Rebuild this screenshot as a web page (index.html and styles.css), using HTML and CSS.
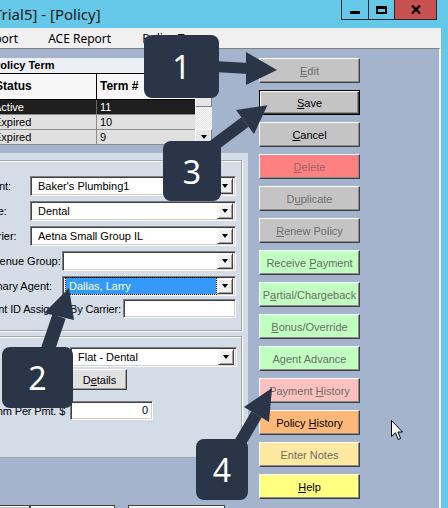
FILE: index.html
```html
<!DOCTYPE html>
<html>
<head>
<meta charset="utf-8">
<title>Policy</title>
<link rel="stylesheet" href="styles.css">
</head>
<body>
<header class="titlebar">
  <div class="title">[Trial5] - [Policy]</div>
  <div class="winbtns">
    <div class="wb wb-min"><span class="g-min"></span></div>
    <div class="wb wb-max"><span class="g-max"></span></div>
    <div class="wb wb-close"><svg width="10" height="9" viewBox="0 0 10 9"><path d="M1 0.5 L9 8.5 M9 0.5 L1 8.5" stroke="#000" stroke-width="2.2"/></svg></div>
  </div>
</header>
<div class="frame">
  <nav class="menubar">
    <span class="mi mi-first">Report</span>
    <span class="mi mi-ace">ACE Report</span>
    <span class="mi">Policy Term</span>
  </nav>
  <main class="client">
    <section class="left">
      <div class="term">
        <div class="term-title">Policy Term</div>
        <div class="term-body">
          <div class="term-table">
            <div class="trow thead"><div class="c1">Status</div><div class="c2">Term #</div></div>
            <div class="trow tsel"><div class="c1">Active</div><div class="c2">11</div></div>
            <div class="trow"><div class="c1">Expired</div><div class="c2">10</div></div>
            <div class="trow"><div class="c1">Expired</div><div class="c2">9</div></div>
          </div>
          <div class="vscroll">
            <div class="sb-btn"></div>
            <div class="sb-thumb"></div>
            <div class="sb-track"></div>
            <div class="sb-btn sb-down"><span class="tri"></span></div>
          </div>
        </div>
      </div>

      <div class="panel">
        <div class="grp grp1">
          <div class="frow"><span class="lbl w50">Client:</span><div class="combo"><span class="val">Baker's Plumbing1</span><span class="dd"><span class="tri"></span></span></div></div>
          <div class="frow"><span class="lbl w50">Type:</span><div class="combo"><span class="val">Dental</span><span class="dd"><span class="tri"></span></span></div></div>
          <div class="frow"><span class="lbl w50">Carrier:</span><div class="combo"><span class="val">Aetna Small Group IL</span><span class="dd"><span class="tri"></span></span></div></div>
          <div class="frow"><span class="lbl w82">Revenue Group:</span><div class="combo"><span class="val"></span><span class="dd"><span class="tri"></span></span></div></div>
          <div class="frow"><span class="lbl w82">Primary Agent:</span><div class="combo"><span class="val hl">Dallas, Larry</span><span class="dd"><span class="tri"></span></span></div></div>
          <div class="frow frow-last"><span class="lbl w143 tight">Client ID Assigned By Carrier:</span><div class="tbox"></div></div>
        </div>
        <div class="grp grp2">
          <div class="frow"><span class="lbl w90"></span><div class="combo c-flat"><span class="val">Flat - Dental</span><span class="dd"><span class="tri"></span></span></div></div>
          <div class="frow frow-btn"><span class="lbl w92"></span><div class="pbtn">D<u>e</u>tails</div></div>
          <div class="frow frow-amt"><span class="lbl w90 tight">Comm Per Pmt. $</span><div class="tbox amt">0</div></div>
        </div>
      </div>

      <div class="bottom">
        <div class="bt bt1"></div>
        <div class="bt bt2"></div>
        <div class="bt bt3"></div>
      </div>
    </section>

    <aside class="buttons">
      <div class="btn gray dis"><span><u>E</u>dit</span></div>
      <div class="btn gray default"><span><u>S</u>ave</span></div>
      <div class="btn gray"><span><u>C</u>ancel</span></div>
      <div class="btn red dis"><span><u>D</u>elete</span></div>
      <div class="btn gray dis"><span>D<u>u</u>plicate</span></div>
      <div class="btn gray dis"><span><u>R</u>enew Policy</span></div>
      <div class="btn green dis"><span>Receive <u>P</u>ayment</span></div>
      <div class="btn green dis"><span>P<u>a</u>rtial/Chargeback</span></div>
      <div class="btn green dis"><span><u>B</u>onus/Override</span></div>
      <div class="btn green dis"><span>Agent Advance</span></div>
      <div class="btn pink dis"><span>Payment <u>H</u>istory</span></div>
      <div class="btn orange"><span>Policy <u>H</u>istory</span></div>
      <div class="btn cream dis"><span>Enter Notes</span></div>
      <div class="btn yellow"><span><u>H</u>elp</span></div>
    </aside>
  </main>
</div>

<div class="callout co1">1</div>
<div class="callout co2">2</div>
<div class="callout co3">3</div>
<div class="callout co4">4</div>

<svg class="arrows" width="448" height="508" viewBox="0 0 448 508">
  <g fill="#2b3548">
    <polygon points="214,61 249,63 249,74 214,72"/>
    <polygon points="246,52 277,70 246,85"/>
    <polygon points="208.6,156.8 201.4,147.2 241.4,117.2 248.6,126.8"/>
    <polygon points="236,110 267.4,105.2 254,134"/>
    <polygon points="53.6,354.3 40.4,349.7 52.4,314.2 65.6,318.8"/>
    <polygon points="44,313 69,288 74,320"/>
    <polygon points="244.2,447.6 233.8,441.6 251.3,411.5 261.7,417.5"/>
    <polygon points="244,407 272,388 269,422"/>
  </g>
</svg>

<svg class="cursor" width="14" height="22" viewBox="0 0 14 22">
  <polygon points="0.5,0.5 0.5,16.5 4.5,12.8 7.3,19.5 9.6,18.5 6.9,12 11.5,12" fill="#fff" stroke="#000" stroke-width="1"/>
</svg>
</body>
</html>
```
FILE: styles.css
```css
* { box-sizing: border-box; }
html, body { margin: 0; padding: 0; }
body {
  width: 448px;
  height: 508px;
  overflow: hidden;
  position: relative;
  background: #66c8e8;
  font-family: "Liberation Sans", Arial, sans-serif;
  font-size: 11px;
  color: #000;
}

/* title bar */
.titlebar { height: 28px; display: flex; align-items: flex-start; }
.title {
  flex: 1;
  margin-left: -11px;
  margin-top: 4px;
  font-family: "Noto Sans", sans-serif;
  font-size: 15px;
  line-height: 20px;
  color: #1b1b1b;
  white-space: nowrap;
}
.winbtns {
  display: flex;
  margin-right: 11px;
  border: 1px solid #2a2a2a;
  border-top: none;
  height: 20px;
}
.wb { height: 19px; display: flex; align-items: center; justify-content: center; }
.wb-min { width: 27px; border-right: 1px solid #2a2a2a; }
.wb-max { width: 26px; border-right: 1px solid #2a2a2a; }
.wb-close { width: 41px; background: #c75050; }
.g-min { width: 10px; height: 3px; background: #000; margin-top: 5px; }
.g-max { width: 11px; height: 8px; border: 2px solid #000; border-top-width: 3px; }

/* frame */
.frame { width: 441px; }
.menubar {
  height: 20px;
  background: #f0f0f0;
  display: flex;
  align-items: center;
  font-family: "Noto Sans", sans-serif;
  font-size: 12px;
  white-space: nowrap;
  overflow: hidden;
}
.mi-first { margin-left: -20px; }
.mi-ace { margin-left: 30px; }
.mi + .mi:last-child { margin-left: 31px; }

.client {
  height: 460px;
  background: #a3b4cc;
  border-top: 1px solid #808080;
  border-right: 2px solid #fff;
  display: flex;
  align-items: flex-start;
  padding-top: 9px;
}

/* left column */
.left { width: 248px; display: flex; flex-direction: column; }

.term { width: 212px; }
.term-title {
  height: 15px;
  background: #eceff3;
  font-weight: bold;
  line-height: 15px;
  text-indent: -7px;
  white-space: nowrap;
  overflow: hidden;
}
.term-body { display: flex; height: 72px; }
.term-table { width: 195px; background: #dcdcdc; }
.trow { display: flex; height: 15px; line-height: 14px; border-bottom: 1px solid #8c8c8c; background: #e0e0e0; }
.trow .c1 { width: 97px; border-right: 1px solid #8c8c8c; text-indent: -6px; overflow: hidden; white-space: nowrap; }
.trow .c2 { flex: 1; padding-left: 3px; }
.thead { height: 27px; line-height: 25px; background: #f7f7f7; border-top: 1px solid #000; border-bottom: 1px solid #000; font-weight: bold; font-size: 12px; }
.thead .c1 { border-right-color: #000; text-indent: -5px; }
.tsel { background: #1e1e1e; color: #fff; }
.tsel .c1 { border-right-color: #6a6a6a; }

.vscroll { width: 17px; display: flex; flex-direction: column; background: #f0f0f0; }
.sb-btn {
  height: 16px;
  background: #e6e6e6;
  border: 1px solid;
  border-color: #fff #808080 #808080 #fff;
  display: flex;
  align-items: center;
  justify-content: center;
}
.sb-thumb { height: 18px; background: #e6e6e6; border: 1px solid; border-color: #fff #808080 #808080 #fff; }
.sb-track {
  flex: 1;
  background-color: #fafafa;
  background-image: repeating-conic-gradient(#e4e4e4 0 25%, #fafafa 0 50%);
  background-size: 2px 2px;
}
.tri {
  width: 0; height: 0;
  border-left: 3.5px solid transparent;
  border-right: 3.5px solid transparent;
  border-top: 4px solid #000;
}

/* form panel */
.panel {
  margin-top: 8px;
  width: 248px;
  height: 305px;
  background: #d3dce7;
  padding-top: 7px;
  overflow: hidden;
}
.grp {
  margin-left: -30px;
  width: 272px;
  border: 1px solid #9ea6b0;
  box-shadow: inset 1px 1px 0 #fff, 1px 1px 0 #fff;
  padding: 0 5px 0 9px;
}
.grp1 { height: 171px; padding-top: 15px; }
.grp2 { height: 122px; margin-top: 5px; padding-top: 10px; }

.frow { display: flex; align-items: center; height: 20px; margin-bottom: 5px; white-space: nowrap; }
.frow-last { margin-top: -2px; height: 19px; }
.lbl { flex: none; overflow: visible; }
.tight { letter-spacing: -0.15px; }
.w50 { width: 50px; }
.w82 { width: 82px; }
.w90 { width: 90px; }
.w92 { width: 92px; }
.w143 { width: 143px; }

.combo {
  flex: 1;
  height: 20px;
  background: #fff;
  border: 1px solid;
  border-color: #808080 #fff #fff #808080;
  box-shadow: inset 1px 1px 0 #404040, inset -1px -1px 0 #d4d0c8;
  display: flex;
  align-items: center;
  padding: 2px;
}
.val { flex: 1; height: 16px; line-height: 16px; padding-left: 4px; margin-left: 1px; }
.val.hl { background: #3399ff; color: #fff; outline: 1px dotted #000; outline-offset: 0; margin-right: 1px; padding-left: 3px; }
.dd {
  width: 16px;
  height: 16px;
  background: #f0f0f0;
  border: 1px solid;
  border-color: #f0f0f0 #404040 #404040 #f0f0f0;
  box-shadow: inset 1px 1px 0 #fff, inset -1px -1px 0 #a0a0a0;
  display: flex;
  align-items: center;
  justify-content: center;
}
.c-flat { flex: none; width: 167px; }
.tbox {
  flex: 1;
  height: 19px;
  background: #fff;
  border: 1px solid;
  border-color: #808080 #fff #fff #808080;
  box-shadow: inset 1px 1px 0 #404040, inset -1px -1px 0 #d4d0c8;
}
.frow-btn { margin-top: -3px; height: 21px; }
.pbtn {
  width: 55px;
  height: 21px;
  background: #e1e1e1;
  border: 1px solid;
  border-color: #fff #404040 #404040 #fff;
  box-shadow: inset -1px -1px 0 #a0a0a0;
  display: flex;
  align-items: center;
  justify-content: center;
}
.frow-amt { margin-top: 11px; height: 19px; }
.tbox.amt { flex: none; width: 83px; text-align: right; padding-right: 4px; line-height: 16px; }

.bottom { display: flex; margin-top: 47px; height: 6px; }
.bt { height: 6px; border: 1px solid #404040; border-bottom: none; background: #f4f4f4; box-shadow: inset 1px 1px 0 #fff; }
.bt1 { width: 32px; margin-left: -2px; background: #c4c4c4; }
.bt2 { width: 85px; }
.bt3 { width: 97px; margin-left: 13px; }

/* buttons column */
.buttons { margin-left: 11px; width: 101px; display: flex; flex-direction: column; gap: 7px; }
.btn {
  height: 25px;
  border: 1px solid;
  border-color: #fff #404040 #404040 #fff;
  box-shadow: inset -1px -1px 0 #8a8a8a;
  display: flex;
  align-items: center;
  justify-content: center;
  white-space: nowrap;
  color: #000;
}
.btn.default { border-color: #000; box-shadow: inset 1px 1px 0 #fff, inset -1px -1px 0 #404040, inset -2px -2px 0 #8a8a8a; }
.btn.dis { color: #6d6d6d; }
.gray { background: #c4c4c4; }
.red { background: #ff8080; }
.red.dis { color: #9b6464; }
.green { background: #c0ffc0; }
.pink { background: #ffc0c0; }
.orange { background: #ffb878; }
.cream { background: #ffe8a0; }
.yellow { background: #ffff80; }

/* overlays */
.callout {
  position: absolute;
  background: #2b3548;
  border-radius: 8px;
  color: #fff;
  font-family: "Noto Sans", sans-serif;
  font-size: 32px;
  display: flex;
  align-items: center;
  justify-content: center;
}
.co1 { left: 144px; top: 35px; width: 75px; height: 63px; }
.co2 { left: 2px; top: 347px; width: 71px; height: 61px; }
.co3 { left: 163px; top: 141px; width: 58px; height: 60px; }
.co4 { left: 196px; top: 439px; width: 52px; height: 61px; }
.arrows { position: absolute; left: 0; top: 0; pointer-events: none; }
.cursor { position: absolute; left: 391px; top: 420px; }
```
